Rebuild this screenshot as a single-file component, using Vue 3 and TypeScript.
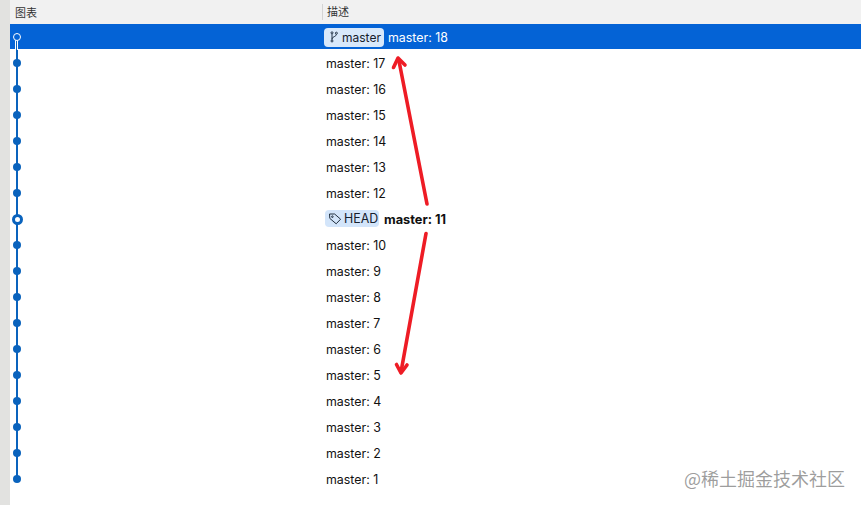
<script setup lang="ts">
interface Row { n: number; selected?: boolean; head?: boolean }
const rows: Row[] = Array.from({ length: 18 }, (_, i) => {
  const n = 18 - i
  return { n, selected: n === 18, head: n === 11 }
})
</script>

<template>
  <div class="page">
    <div class="gutter"></div>
    <div class="main">
      <div class="header">
        <div class="col-graph">图表</div>
        <div class="col-desc">描述</div>
      </div>
      <div class="list">
        <div v-for="r in rows" :key="r.n" class="row" :class="{ selected: r.selected, head: r.head }">
          <div class="graph">
            <span class="line" :class="{ first: r.n === 18, last: r.n === 1 }"></span>
            <span class="node"></span>
          </div>
          <div class="desc">
            <span v-if="r.selected" class="badge branch">
              <svg width="10" height="12" viewBox="0 0 10 12" fill="none" stroke="#26364a" stroke-width="1">
                <path d="M3 2.8V9.2M7.4 3.2C7.4 6 3 5.4 3 8" />
                <circle cx="3" cy="1.8" r="1" />
                <circle cx="7.4" cy="2.2" r="1" />
                <circle cx="3" cy="10" r="1" />
              </svg>
              master
            </span>
            <span v-if="r.head" class="badge tag">
              <svg width="14" height="13" viewBox="0 0 14 13" fill="none" stroke="#22303f" stroke-width="1">
                <path d="M1.5 2H6.6L12.6 7.2 8.2 11.8 1.8 6.4Z" stroke-linejoin="round" />
                <circle cx="4.4" cy="4.7" r="0.8" />
              </svg>
              HEAD
            </span>
            <span class="msg">master: {{ r.n }}</span>
          </div>
        </div>
      </div>
    </div>
    <svg class="arrows" width="861" height="505" viewBox="0 0 861 505" fill="none" stroke="#ee1c25" stroke-linecap="round" stroke-linejoin="round">
      <path d="M427 204 399 61" stroke-width="3.6" />
      <path d="M393.5 67.5 398 58 405 65" stroke-width="3.6" />
      <path d="M426 233.5 401 372" stroke-width="3.6" />
      <path d="M396.5 364.5 401 373 407 365" stroke-width="3.6" />
    </svg>
    <div class="watermark">@稀土掘金技术社区</div>
  </div>
</template>

<style>
html, body { margin: 0; background: #fff; }
</style>

<style scoped>
.page {
  position: relative;
  display: flex;
  width: 861px;
  height: 505px;
  overflow: hidden;
  background: #fff;
  font-family: Inter, "Noto Sans CJK SC", sans-serif;
  color: #111;
}
.gutter {
  width: 10px;
  flex: none;
  background: #e2e2e0;
}
.main {
  flex: 1;
  min-width: 0;
}
.header {
  display: flex;
  align-items: center;
  height: 24px;
  background: #f1f1f1;
  font-size: 11px;
  color: #333;
}
.col-graph {
  width: 312px;
  padding-left: 5px;
  box-sizing: border-box;
}
.col-desc {
  border-left: 1px solid #d4d4d4;
  padding-left: 4px;
  height: 16px;
  line-height: 16px;
}
.row {
  display: flex;
  align-items: center;
  height: 26px;
  font-size: 12.4px;
}
.row.selected {
  background: linear-gradient(#0463d6 25px, #fff 25px);
  color: #fff;
}
.graph {
  position: relative;
  width: 316px;
  height: 100%;
  flex: none;
}
.line {
  position: absolute;
  left: 6px;
  top: 0;
  bottom: 0;
  width: 2px;
  background: #0a63bd;
}
.line.first { top: 13px; left: 5px; width: 1px; background: #fff; box-shadow: 1px 0 0 #0a63bd, 2px 0 0 #fff; }
.line.last { bottom: 13px; }
.node {
  position: absolute;
  left: 3px;
  top: 9px;
  width: 8px;
  height: 8px;
  border-radius: 50%;
  background: #0a63bd;
}
.selected .node {
  background: #0463d6;
  border: 1.5px solid #fff;
  box-sizing: border-box;
}
.head .node {
  left: 1.5px;
  top: 7.5px;
  width: 5px;
  height: 5px;
  background: #fff;
  border: 3px solid #0a63bd;
}
.desc {
  display: flex;
  align-items: center;
  white-space: nowrap;
}
.badge {
  display: inline-flex;
  align-items: center;
  box-sizing: border-box;
  border-radius: 4px;
  margin-right: 4px;
  color: #16202c;
}
.branch {
  width: 60px;
  height: 19px;
  gap: 3px;
  padding-left: 5px;
  margin-left: -2px;
  font-size: 12px;
  background: #d8e8fa;
}
.tag {
  width: 54px;
  height: 17px;
  gap: 2px;
  padding-left: 3px;
  margin-left: -1px;
  margin-right: 5px;
  margin-bottom: 1px;
  font-size: 12.4px;
  background: #d3e5fa;
}
.head .msg {
  font-size: 12.8px;
  font-weight: 700;
  color: #111;
}
.arrows {
  position: absolute;
  left: 0;
  top: 0;
  pointer-events: none;
}
.watermark {
  position: absolute;
  left: 684px;
  top: 467px;
  font-size: 18px;
  line-height: 22px;
  color: rgba(120, 120, 120, 0.72);
  font-family: "Noto Sans CJK SC", sans-serif;
  white-space: nowrap;
}
</style>
